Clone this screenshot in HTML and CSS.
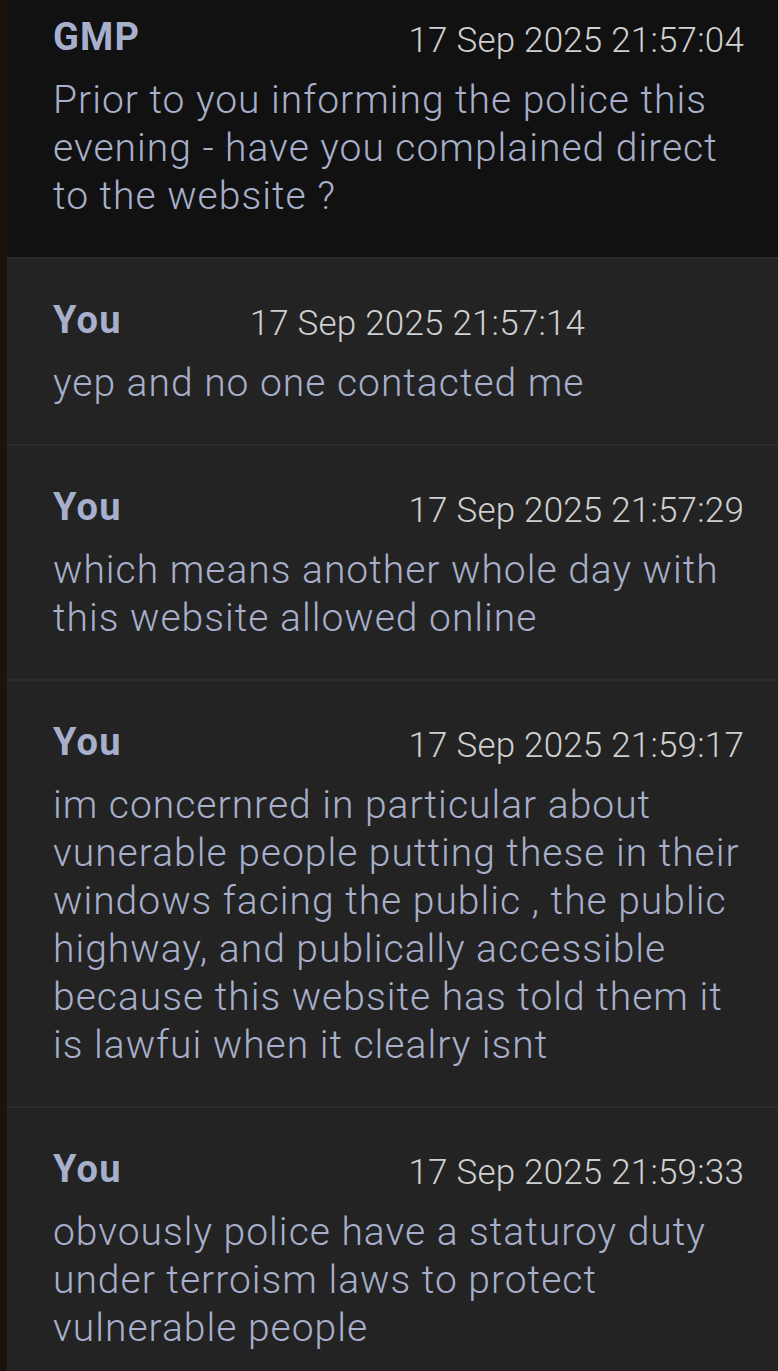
FILE: index.html
```html
<!DOCTYPE html>
<html lang="en">
<head>
  <meta charset="UTF-8" />
  <meta name="viewport" content="width=device-width, initial-scale=1.0"/>
  <title>Messages</title>
  <link rel="stylesheet" href="styles.css">
</head>
<body>
  <div class="thread">
    <!-- incoming message -->
    <div class="message message-first">
      <div class="meta">
        <span class="sender">GMP</span>
        <span class="time">17 Sep 2025 21:57:04</span>
      </div>
      <p class="text">Prior to you informing the police this evening - have you complained direct to the website ?</p>
    </div>

    <div class="message">
      <div class="meta meta-near">
        <span class="sender">You</span>
        <span class="time">17 Sep 2025 21:57:14</span>
      </div>
      <p class="text">yep and no one contacted me</p>
    </div>

    <div class="message">
      <div class="meta">
        <span class="sender">You</span>
        <span class="time">17 Sep 2025 21:57:29</span>
      </div>
      <p class="text">which means another whole day with this website allowed online</p>
    </div>

    <div class="message">
      <div class="meta">
        <span class="sender">You</span>
        <span class="time">17 Sep 2025 21:59:17</span>
      </div>
      <p class="text">im concernred in particular about vunerable people putting these in their windows facing the public , the public highway, and publically accessible because this website has told them it is lawfui when it clealry isnt</p>
    </div>

    <div class="message">
      <div class="meta">
        <span class="sender">You</span>
        <span class="time">17 Sep 2025 21:59:33</span>
      </div>
      <p class="text">obvously police have a staturoy duty under terroism laws to protect vulnerable people</p>
    </div>
  </div>
</body>
</html>
```

FILE: styles.css
```css
body {
  font-family: Roboto, "Liberation Sans", sans-serif;
  background-color: #1b130f;
  margin: 0;
  padding: 0 0 0 7px;
  overflow: hidden;
}

.thread {
  background-color: #232323;
}

.message {
  background-color: #232323;
  border-top: 2px solid #2c2c2c;
  padding: 37px 34px 37px 46px;
}

.message-first {
  background-color: #111111;
  border-top: none;
  padding-top: 13px;
}

.meta {
  display: flex;
  justify-content: space-between;
  align-items: flex-start;
  margin-bottom: 15px;
}

/* ← 2件目だけ時刻が名前の近くにある */
.meta-near {
  justify-content: flex-start;
  gap: 128px;
}

.sender {
  font-size: 38px;
  line-height: 48px;
  font-weight: bold;
  letter-spacing: 1.2px;
  color: #a6b0cd;
}

.time {
  font-size: 35px;
  line-height: 40px;
  font-weight: 300;
  letter-spacing: 0.2px;
  color: #d0d0d0;
  padding-top: 8px;
}

.text {
  margin: 0 -6px 0 0;
  font-size: 39px;
  line-height: 48px;
  font-weight: 300;
  letter-spacing: 1px;
  color: #a7afca;
}
```
